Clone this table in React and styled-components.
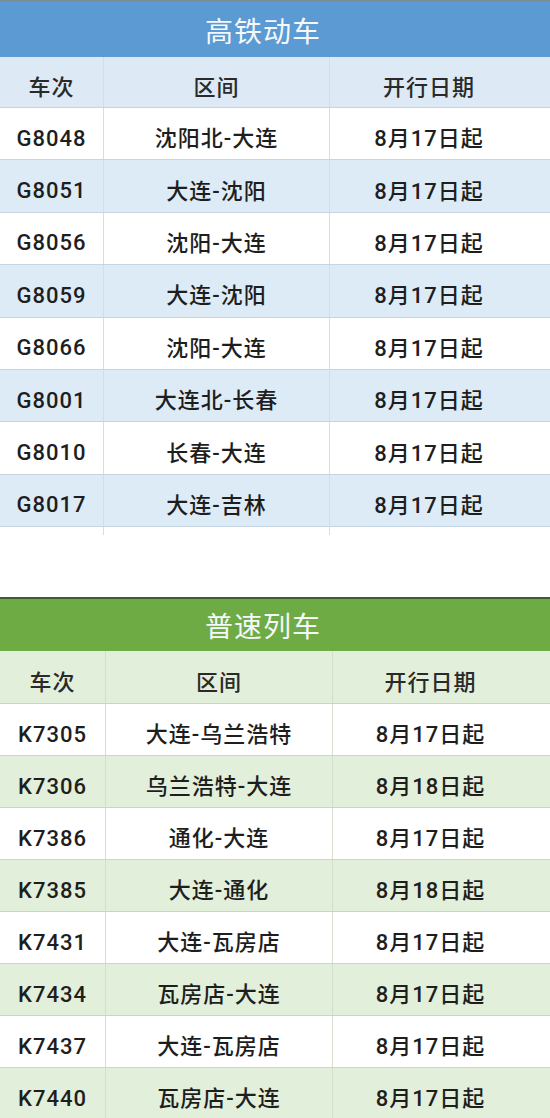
import React from "react";
import styled, { createGlobalStyle } from "styled-components";

const GlobalStyle = createGlobalStyle`
  html, body {
    margin: 0;
    padding: 0;
    background: #ffffff;
  }
  body {
    font-family: Roboto, "Noto Sans CJK SC", sans-serif;
    color: #1f1f1f;
  }
`;

const tones = {
  blue: {
    title: "#5b9ad3",
    edge: "#7e8c99",
    head: "#dde9f4",
    stripe: "#ddebf7",
    rowLine: "#c5d5e4",
    colLine: "#d6dde4",
    cols: "104px 226px 1fr",
  },
  green: {
    title: "#6eab45",
    edge: "#3f5f2c",
    head: "#e2efda",
    stripe: "#e2efda",
    rowLine: "#c5dab7",
    colLine: "#d5ddcf",
    cols: "106px 227px 1fr",
  },
};

const highSpeed = [
  ["G8048", "沈阳北-大连", "8月17日起"],
  ["G8051", "大连-沈阳", "8月17日起"],
  ["G8056", "沈阳-大连", "8月17日起"],
  ["G8059", "大连-沈阳", "8月17日起"],
  ["G8066", "沈阳-大连", "8月17日起"],
  ["G8001", "大连北-长春", "8月17日起"],
  ["G8010", "长春-大连", "8月17日起"],
  ["G8017", "大连-吉林", "8月17日起"],
];

const regular = [
  ["K7305", "大连-乌兰浩特", "8月17日起"],
  ["K7306", "乌兰浩特-大连", "8月18日起"],
  ["K7386", "通化-大连", "8月17日起"],
  ["K7385", "大连-通化", "8月18日起"],
  ["K7431", "大连-瓦房店", "8月17日起"],
  ["K7434", "瓦房店-大连", "8月17日起"],
  ["K7437", "大连-瓦房店", "8月17日起"],
  ["K7440", "瓦房店-大连", "8月17日起"],
];

export default function App() {
  return (
    <>
      <GlobalStyle />
      <Page>
        <Timetable tone="blue" title="高铁动车" rows={highSpeed} rowHeight={52.4} />
        <Gap />
        <Timetable tone="green" title="普速列车" rows={regular} rowHeight={52} />
      </Page>
    </>
  );
}

function Timetable({ tone, title, rows, rowHeight }) {
  return (
    <Section>
      <TitleBar $tone={tone}>{title}</TitleBar>
      <Row $tone={tone} $head $h={tone === "blue" ? 51 : 53}>
        <Cell $tone={tone}>车次</Cell>
        <Cell $tone={tone}>区间</Cell>
        <Cell $tone={tone} $last>开行日期</Cell>
      </Row>
      {rows.map(([no, route, date], i) => (
        <Row key={no} $tone={tone} $striped={i % 2 === 1} $h={rowHeight}>
          <Cell $tone={tone} $code>{no}</Cell>
          <Cell $tone={tone}>{route}</Cell>
          <Cell $tone={tone} $last>{date}</Cell>
        </Row>
      ))}
      {tone === "blue" && (
        <Stub $tone={tone}>
          <Cell $tone={tone} />
          <Cell $tone={tone} />
          <Cell $tone={tone} $last />
        </Stub>
      )}
    </Section>
  );
}

const Page = styled.main`
  width: 550px;
  overflow: hidden;
`;

const Section = styled.section`
  display: flex;
  flex-direction: column;
`;

const Gap = styled.div`
  height: 62px;
`;

const TitleBar = styled.div`
  height: ${(p) => (p.$tone === "blue" ? 57 : 54)}px;
  box-sizing: border-box;
  border-top: 2px solid ${(p) => tones[p.$tone].edge};
  background: ${(p) => tones[p.$tone].title};
  color: #f4f8fb;
  font-family: "Noto Sans CJK SC", sans-serif;
  font-size: 28px;
  font-weight: 400;
  letter-spacing: 1px;
  display: flex;
  align-items: center;
  justify-content: center;
  padding: 0 24px 0 0;
`;

const Row = styled.div`
  display: grid;
  grid-template-columns: ${(p) => tones[p.$tone].cols};
  height: ${(p) => p.$h}px;
  box-sizing: border-box;
  border-bottom: 1px solid ${(p) => tones[p.$tone].rowLine};
  background: ${(p) =>
    p.$head ? tones[p.$tone].head : p.$striped ? tones[p.$tone].stripe : "#ffffff"};
  font-size: 22px;
  font-weight: 500;
  color: ${(p) => (p.$head ? "#2a2a2a" : "#1e1e1e")};
`;

const Stub = styled.div`
  display: grid;
  grid-template-columns: ${(p) => tones[p.$tone].cols};
  height: 8px;
`;

const Cell = styled.div`
  display: flex;
  align-items: center;
  justify-content: center;
  padding: ${(p) => (p.$code ? 9 : 5)}px ${(p) => (p.$last ? 22 : 0)}px 0 0;
  border-right: ${(p) => (p.$last ? "none" : `1px solid ${tones[p.$tone].colLine}`)};
  white-space: nowrap;
  letter-spacing: 1px;
`;
